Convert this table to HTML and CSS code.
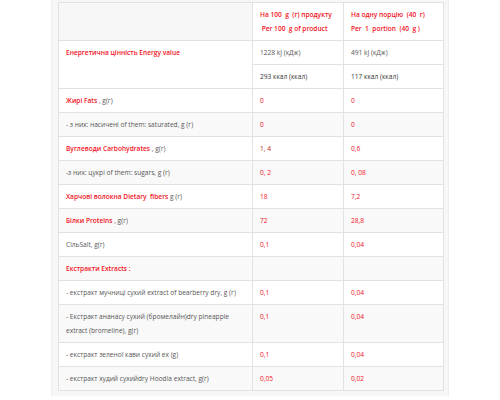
FILE: index.html
```html
<!DOCTYPE html>
<html><head><meta charset="utf-8">
<title>Харчова цінність</title>
<link rel="stylesheet" href="styles.css">
</head>
<body>

<div class="panel">
<table class="facts">
<colgroup><col class="c1"><col class="c2"><col class="c3"></colgroup>
<tr class="head">
<td class="blank"></td>
<td class="hl">На 100&nbsp; g&nbsp; (г) продукту<br>&nbsp;Per 100&nbsp; g of product</td>
<td class="hl">На одну порцію&nbsp; (40&nbsp; г)<br>Per&nbsp; 1&nbsp; portion&nbsp; (40&nbsp; g )</td>
</tr>
<tr>
<td rowspan="2"><b>Енергетична цінність Energy value</b></td>
<td>1228 kJ (кДж)</td>
<td>491 kJ (кДж)</td>
</tr>
<tr>
<td class="dark">293 ккал (ккал)</td>
<td class="dark">117 ккал (ккал)</td>
</tr>
<tr>
<td><b>Жирі Fats</b> , g(г)</td>
<td class="num">0</td>
<td class="num">0</td>
</tr>
<tr class="alt">
<td>- з них: насичені of them: saturated, g (г)</td>
<td class="num">0</td>
<td class="num">0</td>
</tr>
<tr>
<td><b>Вуглеводи Carbohydrates</b> , g(г)</td>
<td class="num dim">1, 4</td>
<td class="num">0,6</td>
</tr>
<tr class="alt">
<td>-з них: цукрі of them: sugars, g (г)</td>
<td class="num">0, 2</td>
<td class="num">0, 08</td>
</tr>
<tr>
<td><b>Харчові волокна Dietary&nbsp; fibers</b> g (г)</td>
<td class="num">18</td>
<td class="num">7,2</td>
</tr>
<tr class="alt">
<td><b>Білки Proteins</b> , g(г)</td>
<td class="num">72</td>
<td class="num">28,8</td>
</tr>
<tr>
<td>СільSalt, g(г)</td>
<td class="num">0,1</td>
<td class="num">0,04</td>
</tr>
<tr class="alt">
<td><b>Екстракти Extracts :</b></td>
<td></td>
<td></td>
</tr>
<tr>
<td>- екстракт мучниці сухий extract of bearberry dry, g (г)</td>
<td class="num">0,1</td>
<td class="num">0,04</td>
</tr>
<tr class="alt">
<td>- Екстракт ананасу сухий (бромелайн)dry pineapple extract (bromeline), g(г)</td>
<td class="num">0,1</td>
<td class="num">0,04</td>
</tr>
<tr>
<td>- екстракт зеленої кави сухий ex (g)</td>
<td class="num">0,1</td>
<td class="num">0,04</td>
</tr>
<tr class="alt">
<td>- екстракт худий сухийdry Hoodia extract, g(г)</td>
<td class="num">0,05</td>
<td class="num">0,02</td>
</tr>
</table>
</div>

</body></html>
```

FILE: styles.css
```css
* {padding:0;margin:0;}
body {background:#fff;font-family:"Open Sans",Arial,sans-serif;color:#555;font-size:6.6px;}

.panel {width:383px;margin:0 auto;padding:2px 7px 5px 6px;background:#f7f7f7;border-left:1px solid #efefef;border-right:1px solid #efefef;}

.facts {width:385px;border-collapse:collapse;table-layout:fixed;background:#fff;border:1px solid #dcdcdc;}
.facts .c1 {width:194px;}
.facts .c2 {width:91px;}
.facts .c3 {width:100px;}
.facts td {border:1px solid #e2e2e2;padding:5px 5px 4px 7px;line-height:14px;vertical-align:top;}
.facts tr.alt td {background:#f9f9f9;}
.facts .head td {padding-top:5px;padding-bottom:4px;white-space:nowrap;}
.facts .head .blank {background:#f7f7f7;}
.facts .hl {color:#f2121e;font-weight:600;}
.facts b {color:#f2121e;font-weight:600;}
.facts .dark {color:#333;}
.facts .num {color:#f2121e;}
.facts .dim {color:#c0231f;}
```
